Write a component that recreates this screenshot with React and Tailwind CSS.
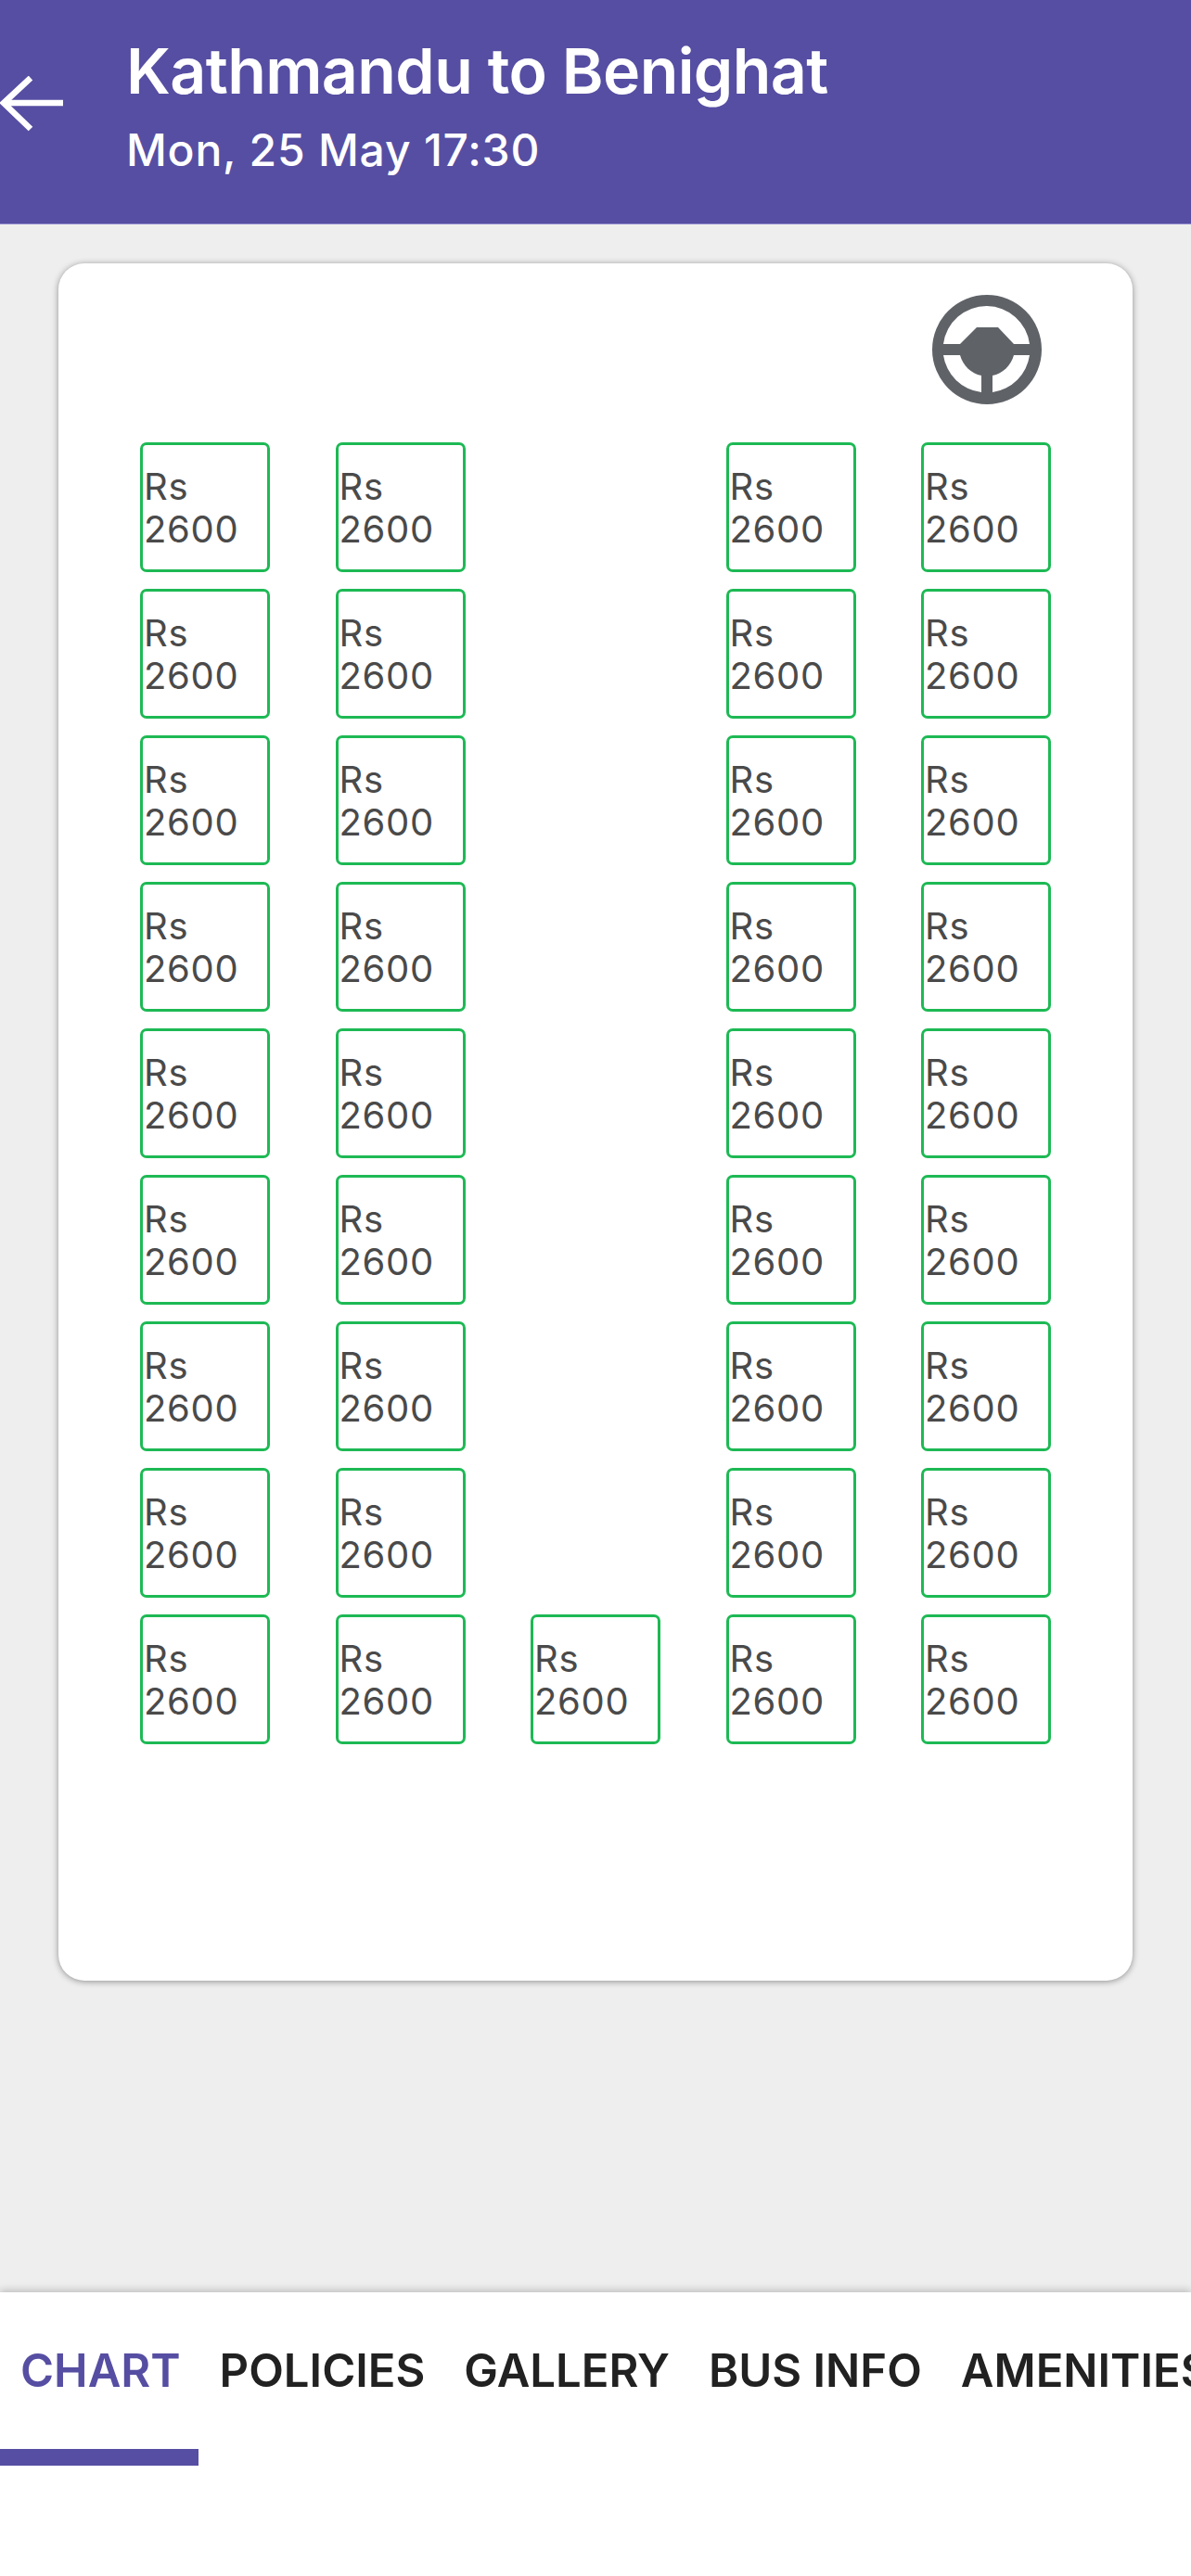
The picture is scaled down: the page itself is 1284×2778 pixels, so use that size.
const COLUMNS = [0, 1, 2, 3, 4];
const ROWS = [0, 1, 2, 3, 4, 5, 6, 7, 8];
const TABS = ['POLICIES', 'GALLERY', 'BUS INFO', 'AMENITIES'];

// The aisle column only has a seat on the back row
const hasSeat = (row, col) => col !== 2 || row === 8;

const Seat = () => (
  <div className="flex h-[140px] w-[140px] flex-col justify-center rounded-[7px] border-[3.5px] border-[#1db954] bg-white pt-[2px] pl-[1px] text-[40px] leading-[46px] tracking-[0.7px] text-[#4a4a4a]">
    <span>Rs</span>
    <span>2600</span>
  </div>
);

const SteeringWheel = () => (
  <svg viewBox="0 0 118 118" className="h-[118px] w-[118px]" fill="#5f6368">
    <path
      fillRule="evenodd"
      d="M59 0a59 59 0 1 0 0 118a59 59 0 0 0 0-118zM59 12a47 47 0 0 1 46 41H88L71 35H48L30 53H12A47 47 0 0 1 59 12zM12 65H30C33 76 42 85 53 87V105A47 47 0 0 1 12 65zM65 105V87C76 85 85 76 88 65H105A47 47 0 0 1 65 105z"
    />
  </svg>
);

export default function App() {
  return (
    <div className="flex h-[2778px] w-[1284px] flex-col overflow-hidden bg-[#eeeeee] font-['Inter',sans-serif]">
      {/* Header */}
      <header className="flex h-[242px] shrink-0 items-start border-b border-[#8f88cc] bg-[#564ea2] text-white">
        <svg viewBox="0 0 68 60" className="mt-[82px] h-[60px] w-[68px] shrink-0" fill="none" stroke="white" strokeWidth="6.5">
          <path d="M68 29H5" />
          <path d="M33 2L4 29L33 57" />
        </svg>
        <div className="ml-[68px] pt-[34px]">
          <h1 className="text-[68px] leading-[84px] font-semibold tracking-[-0.6px] whitespace-nowrap">Kathmandu to Benighat</h1>
          <p className="mt-[15px] text-[48px] leading-[58px] font-medium tracking-[0.8px] whitespace-nowrap">Mon, 25 May 17:30</p>
        </div>
      </header>

      {/* Seat chart card */}
      <main className="flex-1 px-[63px] pt-[42px]">
        <div className="h-[1852px] rounded-[28px] bg-white pt-[34px] pl-[88px] shadow-[0_1px_7px_rgba(0,0,0,0.4)]">
          <div className="flex justify-end pr-[98px]">
            <SteeringWheel />
          </div>
          <div className="mt-[41px] flex flex-col gap-[18px]">
            {ROWS.map((row) => (
              <div key={row} className="flex gap-[70.5px]">
                {COLUMNS.map((col) =>
                  hasSeat(row, col) ? <Seat key={col} /> : <div key={col} className="h-[140px] w-[140px]" />
                )}
              </div>
            ))}
          </div>
        </div>
      </main>

      {/* Bottom tabs */}
      <nav className="relative h-[306px] shrink-0 overflow-hidden bg-white shadow-[0_-2px_8px_rgba(0,0,0,0.22)]">
        <div className="flex gap-[42px] pt-[56px] pl-[22px] text-[49px] leading-[58px] font-semibold whitespace-nowrap text-[#212121]">
          <span className="text-[#564ea2]">CHART</span>
          {TABS.map((tab) => (
            <span key={tab}>{tab}</span>
          ))}
        </div>
        <div className="absolute top-[169px] left-0 h-[18px] w-[214px] bg-[#564ea2]" />
      </nav>
    </div>
  );
}
